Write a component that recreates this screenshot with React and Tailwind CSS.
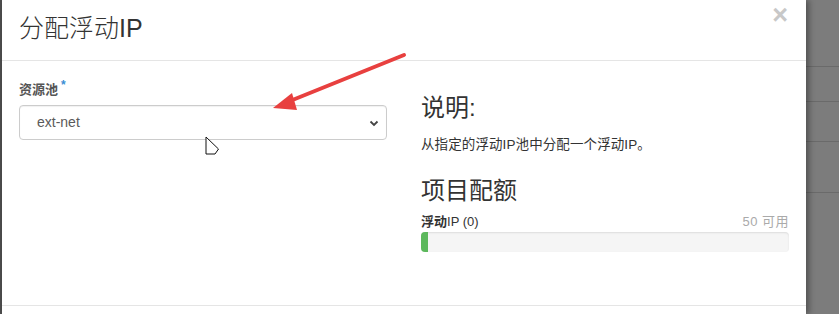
import React from "react";

const font = { fontFamily: '"Liberation Sans", Arial, "Noto Sans CJK SC", sans-serif' };

export default function App() {
  return (
    <div className="relative w-[839px] h-[314px] overflow-hidden bg-[#7c7c7c] flex" style={font}>
      {/* left backdrop strip */}
      <div className="w-[2px] h-full bg-[#4d4d4d] shrink-0" />
      {/* modal */}
      <div className="w-[804px] h-full bg-white shrink-0 flex flex-col shadow-[3px_0_6px_rgba(0,0,0,0.35)] z-10">
        <div className="h-[61px] border-b border-[#e5e5e5] flex items-center justify-between pl-[17px] pr-[17px] shrink-0">
          <h4 className="text-[25px] font-light text-[#333] leading-none mt-[-4px]">分配浮动IP</h4>
          <span className="text-[#c8c8c8] text-[27px] font-bold leading-none mt-[-30px] mr-[1px]">×</span>
        </div>
        <div className="h-[245px] border-b border-[#e5e5e5] px-[17px] grid grid-cols-2 gap-[34px] shrink-0">
          <div className="pt-[19px]">
            <label className="text-[13px] font-bold text-[#555] flex items-start">
              资源池<span className="text-[#3a8ed4] text-[12px] ml-[3px] mt-[-4px]">*</span>
            </label>
            <div className="mt-[5px] h-[35px] border border-[#ccc] rounded-[4px] flex items-center justify-between pl-[17px] pr-[6px] shadow-[inset_0_1px_1px_rgba(0,0,0,0.06)]">
              <span className="text-[14px] text-[#5a5a5a]">ext-net</span>
              <svg width="12" height="12" viewBox="0 0 12 12" className="mt-[1px]">
                <path d="M2.5 4.5 L6 8 L9.5 4.5" fill="none" stroke="#444" strokeWidth="1.8" />
              </svg>
            </div>
          </div>
          <div className="pt-[35px]">
            <h3 className="text-[24px] text-[#333] leading-none font-normal">说明:</h3>
            <p className="text-[13.5px] text-[#333] mt-[18px] leading-none tracking-[0.1px]">从指定的浮动IP池中分配一个浮动IP。</p>
            <h3 className="text-[24px] text-[#333] leading-none font-normal mt-[27px]">项目配额</h3>
            <div className="mt-[12px] flex justify-between text-[13px] leading-none">
              <span className="text-[#333]"><span className="font-bold">浮动</span>IP (0)</span>
              <span className="text-[#aaa] tracking-[0.5px]">50 可用</span>
            </div>
            <div className="mt-[4px] h-[20px] rounded-[4px] bg-[#f5f5f5] shadow-[inset_0_1px_2px_rgba(0,0,0,0.1)] overflow-hidden">
              <div className="h-full w-[7px] bg-[#5cb85c]" />
            </div>
          </div>
        </div>
      </div>
      {/* right backdrop with faint row lines */}
      <div className="flex-1 flex flex-col">
        <div className="h-[67px] border-b border-[#6a6a6a]" />
        <div className="h-[35px] border-b border-[#6a6a6a]" />
        <div className="h-[40px] border-b border-[#6a6a6a]" />
        <div className="h-[51px] border-b border-[#6a6a6a]" />
      </div>

      {/* red annotation arrow */}
      <svg className="absolute left-0 top-0 z-20 pointer-events-none" width="839" height="314">
        <line x1="404" y1="55" x2="290" y2="101" stroke="#e8403f" strokeWidth="4" strokeLinecap="round" />
        <polygon points="273,108 292,93 297,110" fill="#e8403f" />
        {/* mouse cursor */}
        <polygon points="206,137 206,154 215,154 218.5,149" fill="#fff" stroke="#111" strokeWidth="1" strokeLinejoin="round" />
      </svg>
    </div>
  );
}
